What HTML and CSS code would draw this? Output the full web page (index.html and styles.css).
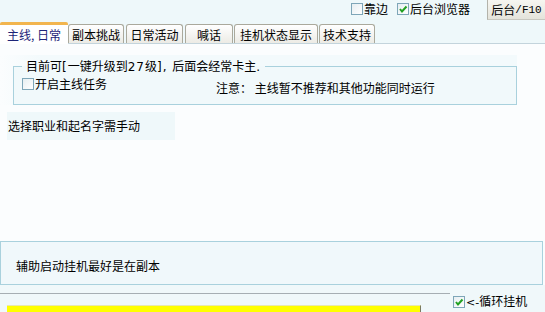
FILE: index.html
```html
<!DOCTYPE html>
<html lang="zh-CN">
<head>
<meta charset="utf-8">
<link rel="stylesheet" href="styles.css">
</head>
<body>
<div class="topbar">
  <label class="cb-item"><span class="cb"></span><span>靠边</span></label>
  <label class="cb-item gap-right"><span class="cb"><svg viewBox="0 0 10 10" class="tick"><polyline points="2,5 4,7.5 8.5,2.5"/></svg></span><span>后台浏览器</span></label>
  <div class="btn">后台<span class="mono">/F10</span></div>
</div>
<div class="tabs">
  <div class="tab sel w68">主线, 日常</div>
  <div class="tab w56">副本挑战</div>
  <div class="tab w57 ml2">日常活动</div>
  <div class="tab w48 ml2">喊话</div>
  <div class="tab w84 ml1">挂机状态显示</div>
  <div class="tab w56 ml1">技术支持</div>
</div>
<div class="content">
  <div class="groupwrap">
    <fieldset class="group">
      <legend>目前可<span class="lat">[</span>一键升级到<span class="lat">27</span>级<span class="lat">], </span>后面会经常卡主<span class="lat">.</span></legend>
      <div class="group-row">
        <label class="cb-item"><span class="cb"></span><span>开启主线任务</span></label>
        <span class="notice">注意： 主线暂不推荐和其他功能同时运行</span>
      </div>
    </fieldset>
  </div>
  <div class="hint">选择职业和起名字需手动</div>
</div>
<div class="panel">辅助启动挂机最好是在副本</div>
<div class="footer">
  <div class="footer-left">
    <div class="bar"></div>
  </div>
  <label class="cb-item loop"><span class="cb"><svg viewBox="0 0 10 10" class="tick"><polyline points="2,5 4,7.5 8.5,2.5"/></svg></span><span><span class="arrow">&lt;-</span>循环挂机</span></label>
</div>
</body>
</html>
```
FILE: styles.css
```css
html, body {
  margin: 0;
  padding: 0;
}
body {
  width: 545px;
  height: 312px;
  overflow: hidden;
  font-family: "Noto Sans CJK SC", "Noto Sans", sans-serif;
  font-size: 12px;
  line-height: 14px;
  color: #000;
  background: #fbfdfe;
}
.mono {
  font-family: "Liberation Mono", monospace;
  font-size: 11px;
}
.lat {
  font-family: "DejaVu Sans", sans-serif;
  font-size: 12px;
  letter-spacing: 1px;
}
.arrow {
  font-family: "DejaVu Sans", sans-serif;
  font-size: 11px;
}
.topbar {
  height: 22px;
  background: #eef8fa;
  display: flex;
  justify-content: flex-end;
  align-items: flex-start;
}
.cb-item {
  display: flex;
  align-items: center;
  height: 14px;
  gap: 1px;
  white-space: nowrap;
}
.topbar .cb-item {
  margin-top: 2px;
  margin-right: 9px;
}
.topbar .cb-item.gap-right {
  margin-right: 17px;
}
.cb {
  width: 12px;
  height: 12px;
  box-sizing: border-box;
  border: 1px solid #7ea6b8;
  background: linear-gradient(135deg, #e6eef1, #ffffff);
  display: inline-flex;
  align-items: center;
  justify-content: center;
}
.tick {
  width: 10px;
  height: 10px;
}
.tick polyline {
  fill: none;
  stroke: #21a121;
  stroke-width: 2;
}
.btn {
  width: 58px;
  height: 20px;
  box-sizing: border-box;
  border-left: 1px solid #b3b3aa;
  border-bottom: 1px solid #c8c8c0;
  background: linear-gradient(#f6f6f1, #e4e4db);
  display: flex;
  align-items: center;
  justify-content: center;
  padding-top: 1px;
}
.tabs {
  height: 21px;
  background: #eef8fa;
  display: flex;
  align-items: flex-end;
  border-bottom: 1px solid #c3d4dc;
}
.tab {
  height: 19px;
  box-sizing: border-box;
  border: 1px solid #aaa99c;
  border-bottom: none;
  border-radius: 3px 3px 0 0;
  background: linear-gradient(#ffffff, #ecebe5);
  display: flex;
  align-items: center;
  justify-content: center;
  padding-top: 1px;
}
.tab.sel {
  height: 22px;
  border: none;
  border-top: 3px solid #f2b54e;
  border-radius: 2px 2px 0 0;
  background: #ffffff;
  color: #1d2478;
  margin-bottom: -1px;
  padding-top: 0;
}
.w68 { width: 68px; }
.w56 { width: 56px; }
.w57 { width: 57px; }
.w48 { width: 48px; }
.w84 { width: 84px; }
.ml1 { margin-left: 1px; }
.ml2 { margin-left: 2px; }
.content {
  height: 197px;
  padding-top: 11px;
  box-sizing: border-box;
  background: #fbfdfe;
}
.groupwrap {
  width: 517px;
  height: 50px;
  box-sizing: border-box;
  padding-top: 4px;
  background: linear-gradient(90deg, #fbfdfe 0, #f3fafc 40px);
}
.group {
  margin: 0 0 0 13px;
  width: 504px;
  height: 46px;
  box-sizing: border-box;
  padding: 0 0 0 8px;
  border: 1px solid #a9d1dd;
  background: #f1f9fb;
}
.group legend {
  padding: 0 4px;
  margin-left: 0;
}
.group-row {
  display: flex;
  align-items: flex-start;
  margin-top: 3px;
}
.notice {
  margin-left: 109px;
  padding-top: 4px;
}
.hint {
  margin: 7px 0 0 7px;
  width: 168px;
  height: 28px;
  box-sizing: border-box;
  padding: 7px 0 0 1px;
  background: #eff8fa;
}
.panel {
  height: 44px;
  margin: 0 2px 0 0;
  box-sizing: border-box;
  border: 1px solid #a9d1dd;
  background: #f0f8fb;
  padding: 17px 0 0 15px;
}
.footer {
  height: 28px;
  background: #f0f8fa;
  display: flex;
  align-items: flex-start;
}
.footer-left {
  width: 450px;
  margin-top: 8px;
  border-top: 1px solid #a6aeb3;
  padding-top: 11px;
}
.bar {
  margin-left: 7px;
  width: 414px;
  height: 12px;
  box-sizing: border-box;
  background: #ffff00;
  border-right: 1px solid #7a7a60;
  border-top: 1px solid #e8e8b0;
}
.loop {
  margin: 10px 0 0 3px;
}
```
